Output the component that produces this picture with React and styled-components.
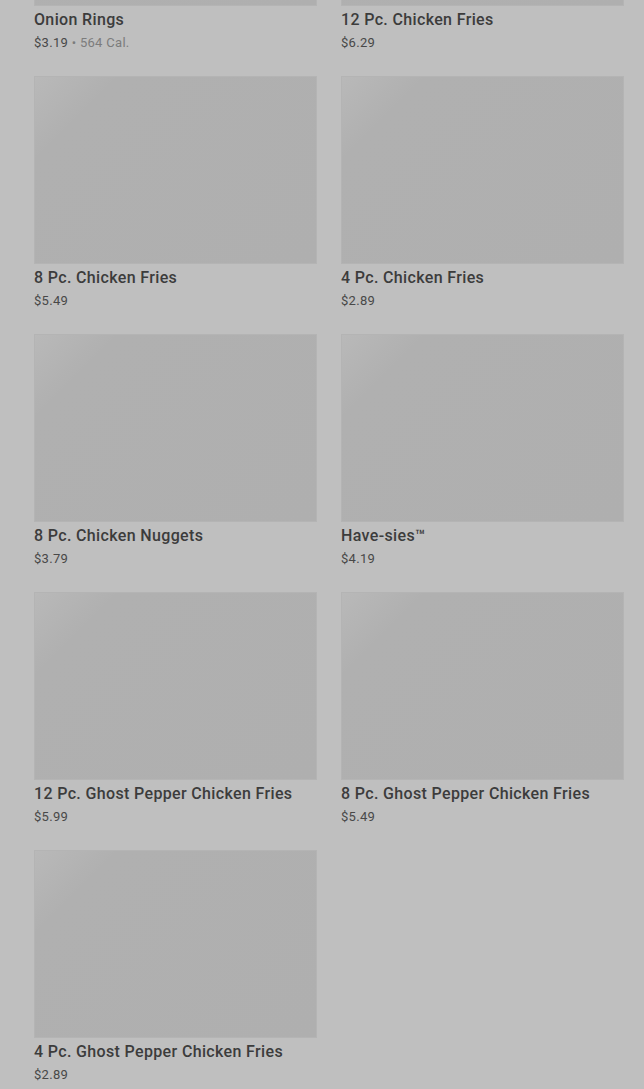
import React from "react";
import styled, { createGlobalStyle } from "styled-components";

const items = [
  { name: "Onion Rings", price: "$3.19", cal: "564 Cal." },
  { name: "12 Pc. Chicken Fries", price: "$6.29" },
  { name: "8 Pc. Chicken Fries", price: "$5.49" },
  { name: "4 Pc. Chicken Fries", price: "$2.89" },
  { name: "8 Pc. Chicken Nuggets", price: "$3.79" },
  { name: "Have-sies™", price: "$4.19" },
  { name: "12 Pc. Ghost Pepper Chicken Fries", price: "$5.99" },
  { name: "8 Pc. Ghost Pepper Chicken Fries", price: "$5.49" },
  { name: "4 Pc. Ghost Pepper Chicken Fries", price: "$2.89" },
];

export default function App() {
  return (
    <>
      <GlobalStyle />
      <Page>
        <MenuGrid>
          {items.map((item, id) => (
            <Card key={id}>
              <Picture />
              <Title>{item.name}</Title>
              <Price>
                {item.price}
                {item.cal && <Cal> • {item.cal}</Cal>}
              </Price>
            </Card>
          ))}
        </MenuGrid>
      </Page>
    </>
  );
}

const GlobalStyle = createGlobalStyle`
  html, body {
    margin: 0;
    background: #bfbfbf;
    overflow: hidden;
  }
  body {
    font-family: Roboto, "Liberation Sans", sans-serif;
  }
`;

const Page = styled.div`
  height: 1089px;
  overflow: hidden;
  padding: 0 20px 0 34px;
  background: #bfbfbf;
`;

const MenuGrid = styled.div`
  display: grid;
  grid-template-columns: 283px 283px;
  column-gap: 24px;
  row-gap: 24px;
  margin-top: -182px;
`;

const Card = styled.div`
  display: flex;
  flex-direction: column;
`;

const Picture = styled.div`
  height: 188px;
  background: linear-gradient(135deg, #b9b9b9 0%, #b0b0b0 18%, #afafaf 100%);
  box-shadow: inset 0 0 0 1px #b4b4b4;
`;

const Title = styled.div`
  margin-top: 4px;
  font-size: 16px;
  line-height: 20px;
  font-weight: 500;
  color: #3c3c3c;
  letter-spacing: 0.35px;
`;

const Price = styled.div`
  margin-top: 4px;
  font-size: 13px;
  line-height: 18px;
  color: #484848;
  letter-spacing: 0.3px;
`;

const Cal = styled.span`
  color: #7c7c7c;
`;
